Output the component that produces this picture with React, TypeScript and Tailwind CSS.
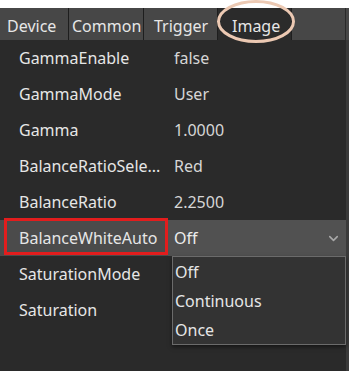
import { ChevronDown } from "lucide-react";

const ROWS: { label: string; value: string }[] = [
  { label: "GammaEnable", value: "false" },
  { label: "GammaMode", value: "User" },
  { label: "Gamma", value: "1.0000" },
  { label: "BalanceRatioSelector", value: "Red" },
  { label: "BalanceRatio", value: "2.2500" },
  { label: "BalanceWhiteAuto", value: "Off" },
  { label: "SaturationMode", value: "" },
  { label: "Saturation", value: "" },
];

const TABS = [
  { name: "Device", cls: "w-[69px] pl-[7px]" },
  { name: "Common", cls: "w-[75px] pl-[3px]" },
  { name: "Trigger", cls: "w-[74px] pl-[10px]" },
  { name: "Image", cls: "w-[74px] pl-[14px]" },
];

export default function App() {
  return (
    <div
      className="relative flex h-[371px] w-[349px] flex-col overflow-hidden bg-white text-[16px] text-[#e6e6e6]"
      style={{ fontFamily: '"Noto Sans", "Open Sans", sans-serif' }}
    >
      <div className="h-[8px] bg-white" />

      {/* tab bar */}
      <div className="flex h-[32px] bg-[#474747] pr-[3px]">
        {TABS.map((t) => (
          <div
            key={t.name}
            className={`${t.cls} flex items-center whitespace-nowrap border-r border-[#1e1e1e] pt-[3px] ${
              t.name === "Image" ? "bg-[#2b2b2b]" : ""
            }`}
          >
            {t.name}
          </div>
        ))}
        <div className="flex-1 border-r border-[#2a2a2a]" />
      </div>

      {/* property grid */}
      <div className="relative flex-1 border-r-[3px] border-[#3a3a3a] bg-[#2a2a2a]">
        {ROWS.map((r) => {
          const active = r.label === "BalanceWhiteAuto";
          return (
            <div
              key={r.label}
              className={`relative flex h-[36px] items-center ${active ? "bg-[#4b4b4b]" : ""}`}
            >
              <div className="w-[168px] truncate whitespace-nowrap pl-[19px] pr-[2px]">
                {r.label === "BalanceRatioSelector" ? "BalanceRatioSele..." : r.label}
              </div>
              <div
                className={`flex h-full flex-1 items-center pl-[6px] ${
                  active ? "bg-[#515151] text-[#ececec]" : "text-[#d6d6d6]"
                }`}
              >
                <span className="flex-1">{r.value}</span>
                {active && (
                  <ChevronDown className="mr-[5px] h-[15px] w-[15px] text-[#a8a8a8]" strokeWidth={2.5} />
                )}
              </div>
              {active && (
                <div className="absolute left-[4px] top-[-2px] h-[37px] w-[164px] border-[3px] border-[#e21d1d]" />
              )}
            </div>
          );
        })}

        {/* dropdown list */}
        <div className="absolute left-[172px] right-0 top-[216px] flex h-[89px] flex-col border border-[#6b6b6b] bg-[#333333] pt-[1px] shadow-[0_2px_4px_rgba(0,0,0,0.5)]">
          {["Off", "Continuous", "Once"].map((o) => (
            <div key={o} className="flex h-[29px] items-center pl-[2px]">
              {o}
            </div>
          ))}
        </div>
      </div>

      {/* annotation ellipse */}
      <svg className="absolute left-0 top-0" width="349" height="50" viewBox="0 0 349 50">
        <ellipse cx="256" cy="21.5" rx="37.5" ry="20" fill="none" stroke="#ecc9b3" strokeWidth="3" />
      </svg>
    </div>
  );
}
